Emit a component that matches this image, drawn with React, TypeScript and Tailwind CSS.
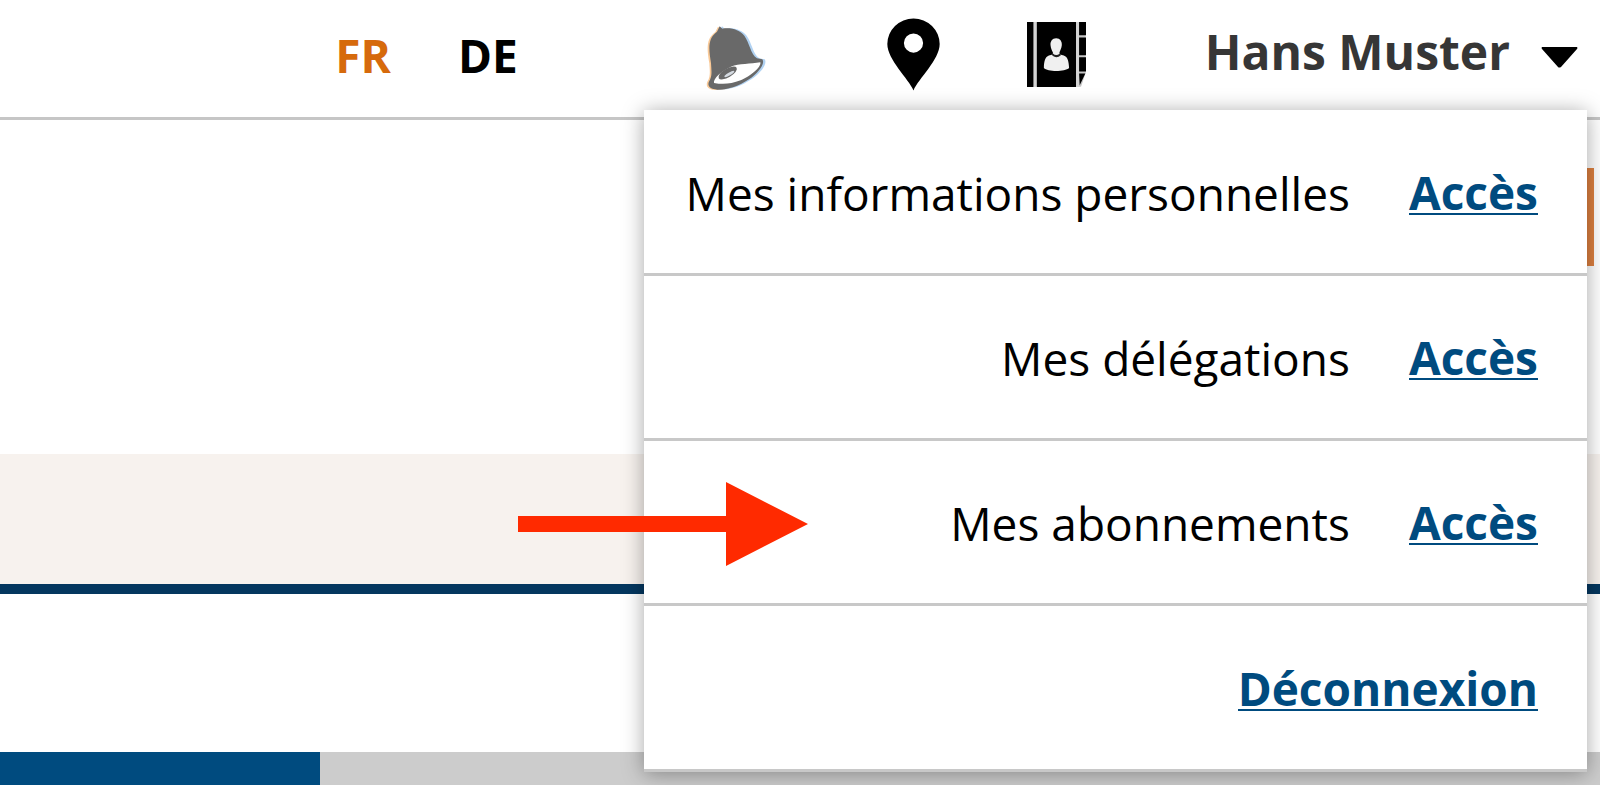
import React, { useState } from "react";

const languages = [
  { label: "FR", href: "#fr", active: true },
  { label: "DE", href: "#de", active: false },
];

const menuItems = [
  { label: "Mes informations personnelles", href: "#informations" },
  { label: "Mes délégations", href: "#delegations" },
  { label: "Mes abonnements", href: "#abonnements", highlighted: true },
];

const bellPath =
  "M92 50 L100 57 C125 52 152 60 166 78 C182 100 184 132 204 146 L220 149 C230 162 206 192 180 209 C150 229 120 240 85 240 C58 239 53 225 63 210 C70 196 67 180 66 160 C60 120 54 88 84 66 Z";

const BellIcon: React.FC = () => (
  <svg viewBox="48 43 192 201" className="h-[67px] w-16" aria-hidden="true">
    <path d={bellPath} fill="#f6b26b" opacity="0.7" transform="translate(-5 1)" />
    <path d={bellPath} fill="#7db4ea" opacity="0.6" transform="translate(7 0)" />
    <path d={bellPath} fill="#696969" />
    <path
      d="M75 220 C72 206 98 184 126 171 C150 162 185 163 214 158 C218 172 184 200 155 212 C126 223 102 225 75 220 Z"
      fill="#fff"
    />
    <ellipse cx="116" cy="190" rx="31" ry="13" fill="#696969" transform="rotate(-30 116 190)" />
    <ellipse cx="121" cy="193" rx="17" ry="4" fill="#d5dbe2" transform="rotate(-30 121 193)" />
  </svg>
);

const PinIcon: React.FC = () => (
  <svg viewBox="51 25 160 219" className="h-[73px] w-[53px]" aria-hidden="true">
    <path
      d="M131 243 C116 208 52 150 52 103 A79 77 0 0 1 210 103 C210 150 146 208 131 243 Z M131 71 A29 29 0 1 0 131 129 A29 29 0 1 0 131 71 Z"
      fillRule="evenodd"
    />
  </svg>
);

const ContactsIcon: React.FC = () => (
  <svg viewBox="471 37 178 196" className="h-[65px] w-[59px]" aria-hidden="true">
    <path d="M471 37 H648 V190 L634 232 H471 Z" fill="#c4c4c4" />
    <path d="M471 37 H491 V233 H471 Z M500 37 H619 V233 H500 Z" />
    <path d="M628 37 H649 V77 H628 Z M628 84 H649 V137 H628 Z M628 143 H649 V186 H628 Z M628 192 H647 L630 228 Z" />
    <path d="M491 37 H500 V233 H491 Z M619 37 H628 V233 H619 Z" fill="#d4d4d4" />
    <path
      d="M559 86 C571 86 577 96 576 107 C575 117 571 123 569 128 C568 134 573 136 582 138 C594 142 597 155 598 176 C585 188 533 188 522 176 C522 155 526 142 537 138 C546 136 551 134 549 128 C546 123 543 117 542 107 C541 96 547 86 559 86 Z"
      fill="#f0f0f0"
    />
    <path d="M547 134 Q559 146 572 134" fill="none" stroke="#222" strokeWidth="6" />
  </svg>
);

const CalloutArrow: React.FC = () => (
  <svg
    viewBox="0 0 290 84"
    className="pointer-events-none absolute top-[41px] -left-[126px] h-[84px] w-[290px]"
    aria-hidden="true"
  >
    <path d="M0 34 H208 V0 L290 42 L208 84 V50 H0 Z" fill="#ff2a00" />
  </svg>
);

const Header: React.FC = () => {
  const [isMenuOpen, setIsMenuOpen] = useState(true);

  return (
    <header className="relative z-10 border-b-3 border-[#c6c6c6]">
      <div className="flex h-[117px] items-center justify-end pr-[22px] pb-2">
        {/* Languages */}
        <nav className="mr-[187px]">
          <ul className="flex gap-[67px]">
            {languages.map(({ label, href, active }) => (
              <li key={label}>
                <a
                  href={href}
                  className={`text-[46px] leading-16 font-bold ${active ? "text-[#d66a0c]" : "text-black"}`}
                >
                  {label}
                </a>
              </li>
            ))}
          </ul>
        </nav>

        {/* Shortcuts */}
        <div className="mr-[119px] flex items-end">
          <a href="#notifications" aria-label="Notifications" className="mr-[118px]">
            <BellIcon />
          </a>
          <a href="#adresses" aria-label="Adresses" className="mr-[87px]">
            <PinIcon />
          </a>
          <a href="#contacts" aria-label="Contacts" className="self-center">
            <ContactsIcon />
          </a>
        </div>

        {/* User menu toggle */}
        <button
          type="button"
          className="flex items-center gap-[31px] pb-1.5 text-[48px] leading-16 font-bold text-[#363636]"
          aria-expanded={isMenuOpen}
          onClick={() => setIsMenuOpen(!isMenuOpen)}
        >
          Hans Muster
          <svg viewBox="0 0 37 21" className="mt-3 h-[21px] w-[37px]" aria-hidden="true">
            <path d="M1 0 H36 Q37 1 36 2 L20 20 Q18 21 17 20 L1 2 Q0 1 1 0 Z" fill="#000" />
          </svg>
        </button>
      </div>

      {isMenuOpen && (
        <div className="absolute top-[110px] right-[13px] w-[943px] bg-white pt-px shadow-[0_2px_20px_rgba(0,0,0,0.35)]">
          <ul>
            {menuItems.map(({ label, href, highlighted }) => (
              <li
                key={label}
                className="relative flex h-[165px] items-center justify-end gap-[59px] border-b-3 border-[#c8c8c8] pt-0.5 pr-[49px] text-[46px] leading-16"
              >
                {highlighted && <CalloutArrow />}
                <span className="text-black">{label}</span>
                <a
                  href={href}
                  aria-label={`Accès ${label}`}
                  className="border-b-2 border-[#004b7f] leading-[42px] font-bold text-[#004b7f]"
                >
                  Accès
                </a>
              </li>
            ))}
            <li className="flex h-[166px] items-center justify-end border-b-3 border-[#c8c8c8] pt-0.5 pr-[49px] text-[46px]">
              <a
                href="#deconnexion"
                className="border-b-2 border-[#004b7f] leading-[42px] font-bold text-[#004b7f]"
              >
                Déconnexion
              </a>
            </li>
          </ul>
        </div>
      )}
    </header>
  );
};

export default function App() {
  return (
    <div className="flex min-h-screen flex-col overflow-hidden bg-white font-['Open_Sans',sans-serif]">
      <Header />
      <main className="flex flex-1 flex-col">
        <section className="flex h-[334px] justify-end pt-12 pr-[6px]">
          <div className="h-[98px] w-40 bg-[#dd8040]" />
        </section>
        <section className="h-[140px] border-b-10 border-[#04375f] bg-[#f7f2ee]" />
        <section className="h-[158px]" />
        <section className="flex min-h-8 flex-1 bg-[#cccccc]">
          <div className="w-1/5 bg-[#004b7f]" />
        </section>
      </main>
    </div>
  );
}
